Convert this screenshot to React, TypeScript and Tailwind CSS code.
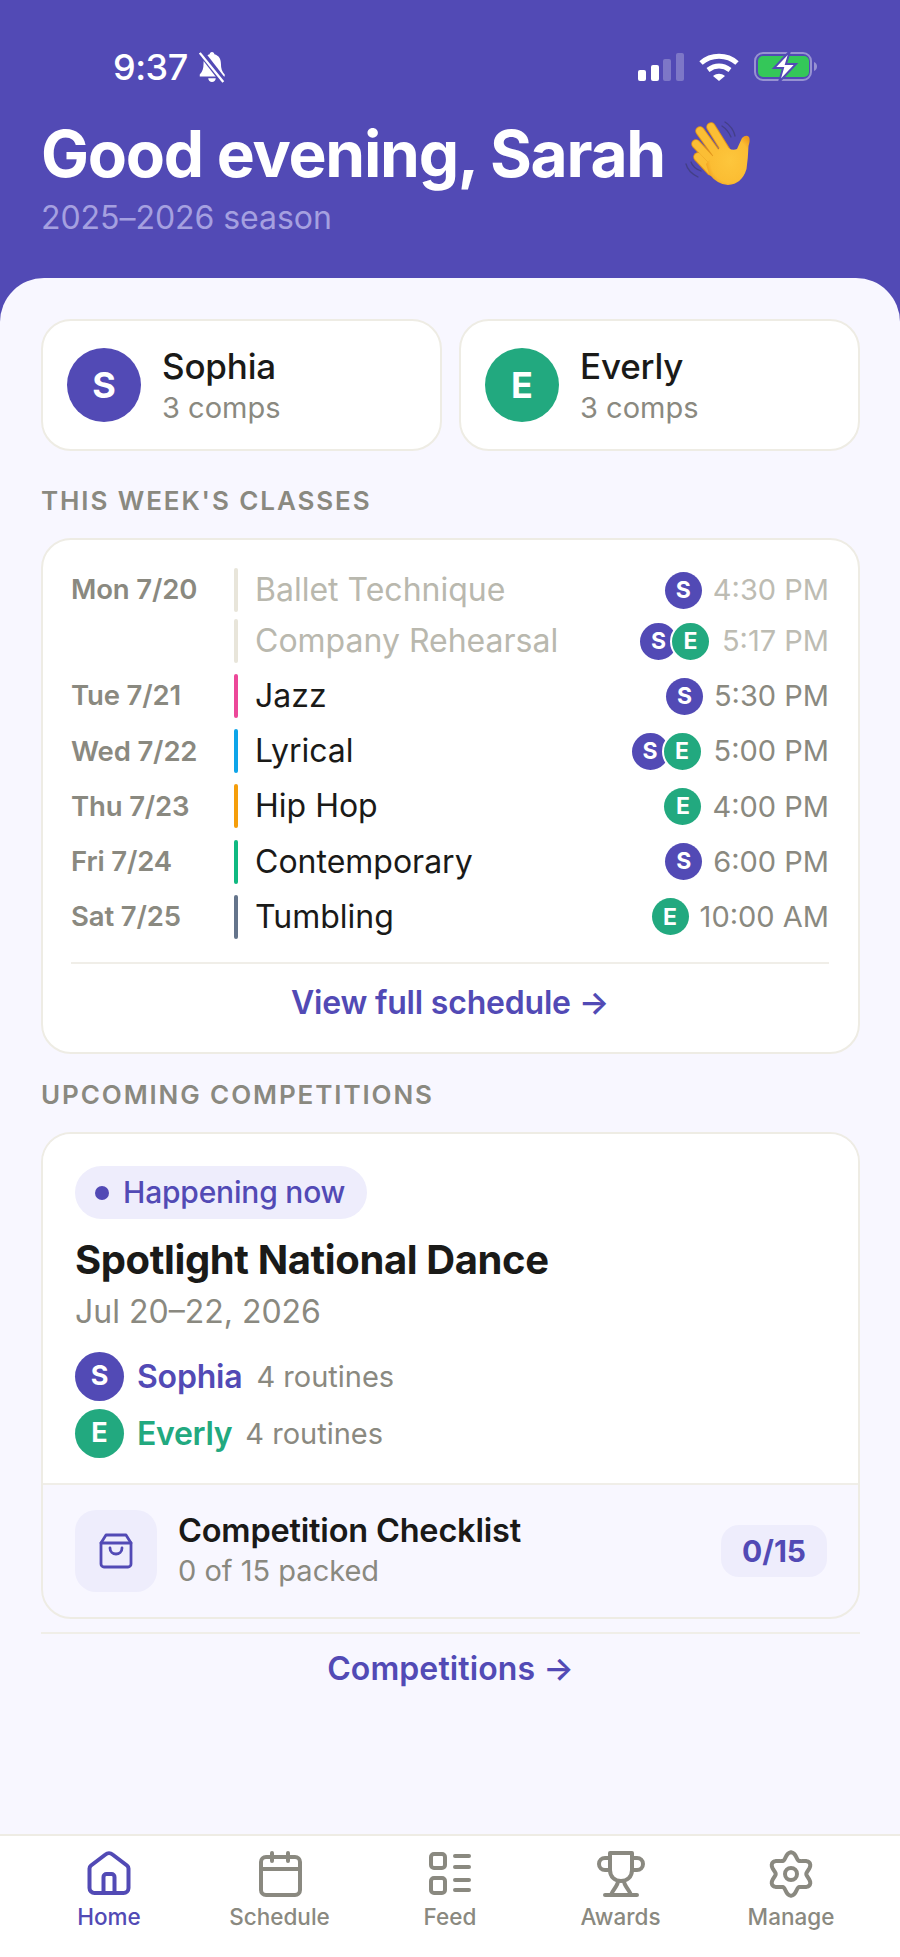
import React from "react";

const P = "#524ab5";
const G = "#22a97f";
const GEAR = (() => {
  const pts: string[] = [];
  for (let i = 0; i < 96; i++) {
    const a = (i / 96) * Math.PI * 2;
    const r = 18.5 + 3.2 * Math.cos(6 * a + Math.PI);
    pts.push(`${(24 + r * Math.cos(a)).toFixed(2)} ${(24 + r * Math.sin(a)).toFixed(2)}`);
  }
  return "M" + pts.join("L") + "Z";
})();

function Av({ l, c, size, text, ring }: { l: string; c: string; size: string; text: string; ring?: boolean }) {
  return (
    <div
      className={`${size} ${text} ${ring ? "border-2 border-white box-content" : ""} rounded-full flex items-center justify-center text-white font-bold shrink-0`}
      style={{ backgroundColor: c }}
    >
      {l}
    </div>
  );
}

function Wave() {
  const fingers = ["M35 13L50 37", "M24 17L42 42", "M20 30L37 48", "M22 43L35 57"];
  return (
    <svg width="85" height="80" viewBox="0 0 85 80" fill="none" className="shrink-0">
      <defs>
        <radialGradient id="hand" cx="0.55" cy="0.5" r="0.6">
          <stop offset="0" stopColor="#fdc63c" />
          <stop offset="0.75" stopColor="#fbbd33" />
          <stop offset="1" stopColor="#ee9a1c" />
        </radialGradient>
      </defs>
      <g stroke="#3f3c78" strokeOpacity=".75" strokeWidth="1.300" strokeLinecap="round">
        <path d="M46 12Q52 16 55 23" />
        <path d="M49 8Q57 13 59 22" />
        <path d="M10 50Q12 58 22 63" />
        <path d="M15 48Q17 54 25 57" />
      </g>
      <g strokeLinecap="round">
        {fingers.map((d) => (
          <path key={d} d={d} stroke="#e2951c" strokeWidth="9.500" />
        ))}
        {fingers.map((d) => (
          <path key={d + "x"} d={d} stroke="#fbbe35" strokeWidth="7.500" />
        ))}
      </g>
      <path
        d="M30 50L47 30Q55 38 61 35L66 24Q70 20 73 23Q74.500 26 72.500 32Q72 45 70.500 55Q66 70 52 71Q42 71 33 60Z"
        fill="url(#hand)"
      />
    </svg>
  );
}

function StatusIcons() {
  return (
    <div className="flex items-center gap-[15px]">
      <svg width="46" height="30" viewBox="0 0 46 30">
        <rect x="0" y="18" width="8" height="11" rx="2" fill="#fff" />
        <rect x="13" y="13" width="8" height="16" rx="2" fill="#fff" />
        <rect x="25" y="7" width="8" height="22" rx="2" fill="#fff" fillOpacity=".25" />
        <rect x="38" y="1" width="8" height="28" rx="2" fill="#fff" fillOpacity=".25" />
      </svg>
      <svg width="40" height="30" viewBox="0 0 40 30" fill="none" stroke="#fff" strokeWidth="5">
        <path d="M2 11c10-9 26-9 36 0" />
        <path d="M9 18c7-5 15-5 22 0" />
        <path d="M14 24l6 5 6-5c-4-3-8-3-12 0z" fill="#fff" stroke="none" />
      </svg>
      <svg width="64" height="32" viewBox="0 0 64 32" fill="none">
        <rect x="1" y="2" width="56" height="27" rx="8" stroke="#fff" strokeOpacity=".4" strokeWidth="2" />
        <rect x="4" y="5" width="51" height="21" rx="5" fill="#34c759" />
        <path d="M60 11c2 .5 3 2.500 3 4.500s-1 4-3 4.500z" fill="#fff" fillOpacity=".4" />
        <path d="M36 0 20 17h9l-4 14 17-18H32z" fill="#fff" stroke={P} strokeWidth="2" />
      </svg>
    </div>
  );
}

function Row({ day, name, bar, who, time, past }: { day?: string; name: string; bar: string; who: string[]; time: string; past?: boolean }) {
  return (
    <div className="flex items-center h-[44px]">
      <div className="w-[163px] text-[27.5px] font-semibold text-[#8a8980] tracking-[-0.15px] whitespace-nowrap">{day}</div>
      <div className="w-[4px] h-[44px] mr-[17px] rounded-sm" style={{ backgroundColor: bar }} />
      <div className={`flex-1 text-[32px] ${past ? "text-[#b9b8ae]" : "text-[#1a1a18]"}`}>{name}</div>
      <div className="flex items-center mr-[11px]">
        {who.map((w, i) => (
          <div key={i} className={i > 0 ? "-ml-[9px] relative" : ""}>
            <Av l={w} c={w === "S" ? P : G} size="w-[37px] h-[37px]" text="text-[23px]" ring={who.length > 1} />
          </div>
        ))}
      </div>
      <div className={`text-[29px] ${past ? "text-[#bdbcb3]" : "text-[#8a8980]"}`}>{time}</div>
    </div>
  );
}

function Kid({ l, c, name }: { l: string; c: string; name: string }) {
  return (
    <div className="flex-1 h-[132px] bg-white border-2 border-[#eeece4] rounded-[30px] flex items-center pl-[24px] gap-[21px]">
      <Av l={l} c={c} size="w-[74px] h-[74px]" text="text-[36px]" />
      <div className="pt-[4px]">
        <div className="text-[35px] font-medium text-[#1a1a18] leading-[41px] tracking-[-0.2px]">{name}</div>
        <div className="text-[29px] text-[#8a8980] leading-[41px]">3 comps</div>
      </div>
    </div>
  );
}

function Label({ children }: { children: React.ReactNode }) {
  return <div className="text-[26px] font-semibold tracking-[1.9px] text-[#8a8980] leading-[30px]">{children}</div>;
}

function Tab({ label, active, children }: { label: string; active?: boolean; children: React.ReactNode }) {
  return (
    <div className="flex flex-col items-center w-[170px]">
      <svg width="48" height="48" viewBox="0 0 48 48" fill="none" stroke={active ? P : "#8a8980"} strokeWidth="4" strokeLinecap="round" strokeLinejoin="round">
        {children}
      </svg>
      <div className={`text-[22.5px] font-medium leading-[26px] mt-[6px] ${active ? "text-[#524ab5]" : "text-[#8a8980]"}`}>{label}</div>
    </div>
  );
}

export default function App() {
  return (
    <div className="w-[900px] h-[1957px] flex flex-col bg-[#524ab5] overflow-hidden" style={{ fontFamily: "Inter, 'Liberation Sans', sans-serif" }}>
      <header className="h-[278px] shrink-0 px-[41px] text-white">
        <div className="flex items-center justify-between h-[40px] mt-[47px] pl-[72px] pr-[41px]">
          <div className="flex items-center gap-[9px]">
            <span className="text-[36px] font-medium tracking-[-0.5px] leading-[40px]">9:37</span>
            <svg width="30" height="32" viewBox="0 0 30 34" fill="#fff">
              <path d="M15 1c1.500 0 2.500 1 2.500 2.500 5 1.500 7 5 7 10 0 5 1 8 4 11.500v2H2v-2c3-3.500 4-6.500 4-11.500 0-5 2-8.500 6.500-10C12.500 2 13.500 1 15 1zM11 29h8c0 2.500-2 4-4 4s-4-1.500-4-4z" />
              <path d="M3 1l24 31" stroke={P} strokeWidth="7" />
              <path d="M2 2l25 31" stroke="#fff" strokeWidth="2.500" />
            </svg>
          </div>
          <StatusIcons />
        </div>
        <div className="flex items-center mt-[33px] h-[68px]">
          <h1 className="text-[64px] font-bold tracking-[-1.25px] leading-[68px] whitespace-nowrap">Good evening, Sarah</h1>
          <div className="ml-[11px] -my-[6px]"><Wave /></div>
        </div>
        <div className="text-[32px] text-[#a5a0e0] leading-[38px] mt-[11px] tracking-[-0.05px]">2025–2026 season</div>
      </header>

      <main className="flex-1 bg-[#f8f7ff] rounded-t-[44px] pl-[41px] pr-[40px] pt-[41px]">
        <div className="flex gap-[17px]">
          <Kid l="S" c={P} name="Sophia" />
          <Kid l="E" c={G} name="Everly" />
        </div>

        <div className="mt-[35px]"><Label>THIS WEEK'S CLASSES</Label></div>

        <div className="mt-[22px] bg-white border-2 border-[#eeece4] rounded-[30px] pl-[28px] pr-[29px] pt-[28px] h-[516px]">
          <Row day="Mon 7/20" name="Ballet Technique" bar="#e8e5da" who={["S"]} time="4:30 PM" past />
          <div className="mt-[7px]"><Row name="Company Rehearsal" bar="#e8e5da" who={["S", "E"]} time="5:17 PM" past /></div>
          <div className="mt-[11px] flex flex-col gap-[11.2px]">
            <Row day="Tue 7/21" name="Jazz" bar="#ec4899" who={["S"]} time="5:30 PM" />
            <Row day="Wed 7/22" name="Lyrical" bar="#0ea5e9" who={["S", "E"]} time="5:00 PM" />
            <Row day="Thu 7/23" name="Hip Hop" bar="#f59e0b" who={["E"]} time="4:00 PM" />
            <Row day="Fri 7/24" name="Contemporary" bar="#10b981" who={["S"]} time="6:00 PM" />
            <Row day="Sat 7/25" name="Tumbling" bar="#64748b" who={["E"]} time="10:00 AM" />
          </div>
          <div className="mt-[23px] border-t-2 border-[#f0eee8] pt-[19px] text-center text-[32px] font-semibold text-[#524ab5] leading-[40px] tracking-[-0.2px]">View full schedule →</div>
        </div>

        <div className="mt-[26px]"><Label>UPCOMING COMPETITIONS</Label></div>

        <div className="mt-[22px] border-2 border-[#eeece4] rounded-[30px] overflow-hidden h-[487px]">
          <div className="bg-white px-[32px] pt-[32px] h-[351px] border-b-2 border-[#f0eee8]">
            <div className="inline-flex items-center h-[53px] rounded-full bg-[#eeedfc] pl-[20px] pr-[22px] gap-[14px]">
              <span className="w-[14px] h-[14px] rounded-full bg-[#524ab5]" />
              <span className="text-[30px] font-medium text-[#524ab5] tracking-[-0.2px]">Happening now</span>
            </div>
            <div className="mt-[16px] text-[40px] font-bold text-[#1a1a18] leading-[50px] tracking-[-0.4px]">Spotlight National Dance</div>
            <div className="mt-[7px] text-[32px] text-[#8a8980] leading-[40px]">Jul 20–22, 2026</div>
            <div className="mt-[20px] flex items-center h-[49px] gap-[13px]">
              <Av l="S" c={P} size="w-[49px] h-[49px]" text="text-[27px]" />
              <span className="text-[32px] font-semibold text-[#524ab5] tracking-[-0.2px]">Sophia</span>
              <span className="text-[29px] text-[#8a8980] ml-[1px]">4 routines</span>
            </div>
            <div className="mt-[8px] flex items-center h-[49px] gap-[13px]">
              <Av l="E" c={G} size="w-[49px] h-[49px]" text="text-[27px]" />
              <span className="text-[32px] font-semibold text-[#22a97f] tracking-[-0.3px]">Everly</span>
              <span className="text-[29px] text-[#8a8980]">4 routines</span>
            </div>
          </div>
          <div className="flex items-center h-[132px] pl-[32px] pr-[31px]">
            <div className="w-[82px] h-[82px] rounded-[21px] bg-[#eeedfc] flex items-center justify-center">
              <svg width="34" height="36" viewBox="0 0 34 36" fill="none" stroke={P} strokeWidth="2.800" strokeLinejoin="round" strokeLinecap="round">
                <path d="M7 2h20l5 8v21a3 3 0 0 1-3 3H5a3 3 0 0 1-3-3V10z" />
                <path d="M2 10h30" />
                <path d="M11 15c0 8 12 8 12 0" />
              </svg>
            </div>
            <div className="ml-[21px] flex-1">
              <div className="text-[32.5px] font-semibold text-[#1a1a18] leading-[40px] tracking-[-0.2px]">Competition Checklist</div>
              <div className="text-[29px] text-[#8a8980] leading-[40px]">0 of 15 packed</div>
            </div>
            <div className="h-[52px] w-[106px] rounded-[18px] bg-[#eeedfc] flex items-center justify-center text-[30px] font-bold text-[#524ab5]">0/15</div>
          </div>
        </div>

        <div className="mt-[13px] border-t-2 border-[#f0eee8] pt-[15px] text-center text-[32px] font-semibold text-[#524ab5] leading-[40px] tracking-[0.1px]">Competitions →</div>
      </main>

      <nav className="h-[123px] shrink-0 bg-white border-t-2 border-[#eeece4] flex justify-between px-[24px] pt-[14px]">
        <Tab label="Home" active>
          <path d="M6 15.500 20.500 4.500a5.500 5.500 0 0 1 7 0L42 15.500a4 4 0 0 1 1.500 3V38a5 5 0 0 1-5 5h-29a5 5 0 0 1-5-5V18.500a4 4 0 0 1 1.500-3z" />
          <path d="M18.500 43V27a3 3 0 0 1 3-3h5a3 3 0 0 1 3 3v16" />
        </Tab>
        <Tab label="Schedule">
          <rect x="5" y="7" width="39" height="38" rx="5" />
          <path d="M5 19h39M16 3v8M32 3v8" />
        </Tab>
        <Tab label="Feed">
          <rect x="5" y="4" width="14" height="14" rx="3" />
          <rect x="5" y="28" width="14" height="15" rx="3" />
          <path d="M29 6h14M29 17h14M29 30h14M29 40h14" />
        </Tab>
        <Tab label="Awards">
          <path d="M13 3h22v17c0 7-5 11-11 11s-11-4-11-11z" />
          <path d="M13 8H8a5.500 5.500 0 0 0 0 12h5M35 8h5a5.500 5.500 0 0 1 0 12h-5" />
          <path d="M21 31c0 5-5 8-7 14M27 31c0 5 5 8 7 14M8 45h32" />
        </Tab>
        <Tab label="Manage">
          <circle cx="24" cy="24" r="6" />
          <path d={GEAR} />
        </Tab>
      </nav>
    </div>
  );
}
